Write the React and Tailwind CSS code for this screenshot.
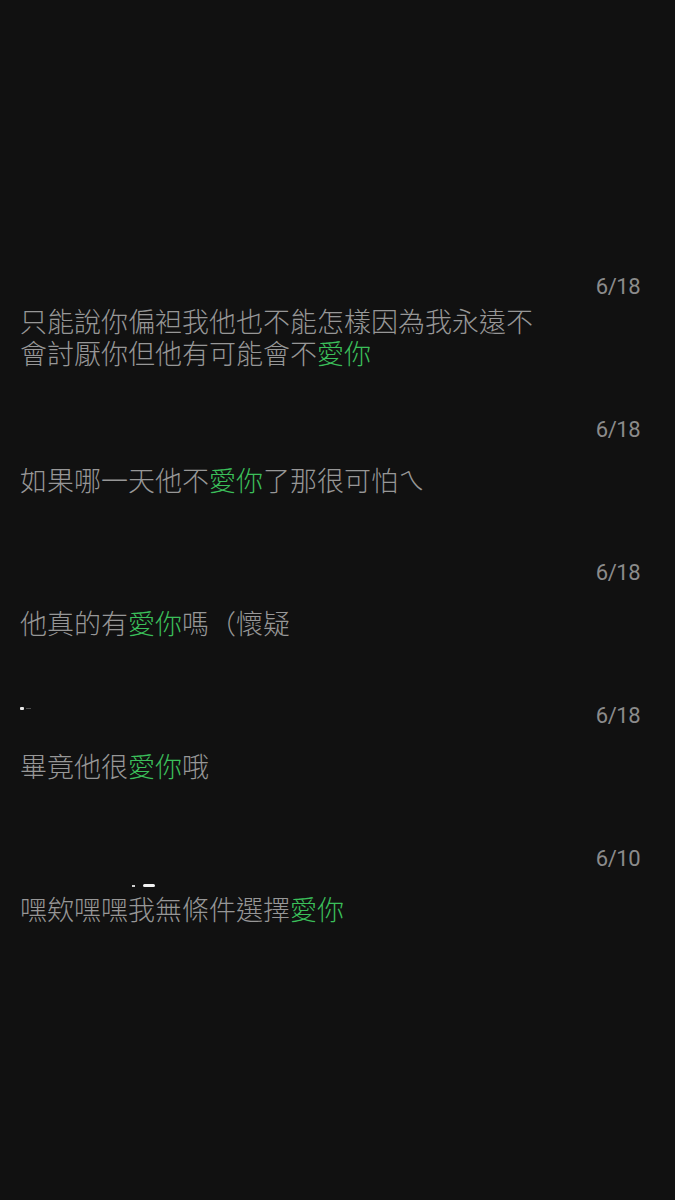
import React from 'react';

const messages = [
  { date: '6/18', parts: ['只能說你偏袒我他也不能怎樣因為我永遠不會討厭你但他有可能會不', '愛你', ''] },
  { date: '6/18', parts: ['如果哪一天他不', '愛你', '了那很可怕ㄟ'] },
  { date: '6/18', parts: ['他真的有', '愛你', '嗎（懷疑'] },
  { date: '6/18', parts: ['畢竟他很', '愛你', '哦'], speck: 'a' },
  { date: '6/10', parts: ['嘿欸嘿嘿我無條件選擇', '愛你', ''], speck: 'b' },
];

// leftovers of the blanked-out sender names
const Speck = ({ type }) => {
  if (type === 'a') {
    return (
      <div className="flex items-center gap-[2px] pt-[10px]">
        <span className="w-[4px] h-[3px] bg-white/90 rounded-[1px]" />
        <span className="w-[5px] h-[1px] bg-white/25" />
      </div>
    );
  }
  if (type === 'b') {
    return (
      <div className="flex items-end gap-[8px] ml-[112px] pt-[44px]">
        <span className="w-[3px] h-[2px] bg-white/80" />
        <span className="w-[12px] h-[3px] bg-white/95 rounded-full" />
      </div>
    );
  }
  return null;
};

const App = () => {
  return (
    <div className="min-h-[1200px] w-[675px] bg-[#111111] pt-[268px]">
      {messages.map((m, i) => (
        <div key={i} className="h-[143px] flex flex-col">
          <div className="h-[36px] flex justify-between items-start pl-[20px] pr-[35px]">
            <Speck type={m.speck} />
            <span
              className="ml-auto text-[22px] leading-[38px] text-[#8b8b8b] tracking-[-0.5px]"
              style={{ fontFamily: 'Roboto, "Liberation Sans", sans-serif' }}
            >
              {m.date}
            </span>
          </div>
          <div className="h-[66px] flex items-center pl-[20px]">
            <p
              className="w-[530px] text-[27px] leading-[32px] font-light text-[#979797]"
              style={{ fontFamily: '"Noto Sans CJK TC", "Noto Sans", sans-serif' }}
            >
              {m.parts[0]}
              <span className="text-[#3bbf5a]">{m.parts[1]}</span>
              {m.parts[2]}
            </p>
          </div>
        </div>
      ))}
    </div>
  );
};

export default App;
